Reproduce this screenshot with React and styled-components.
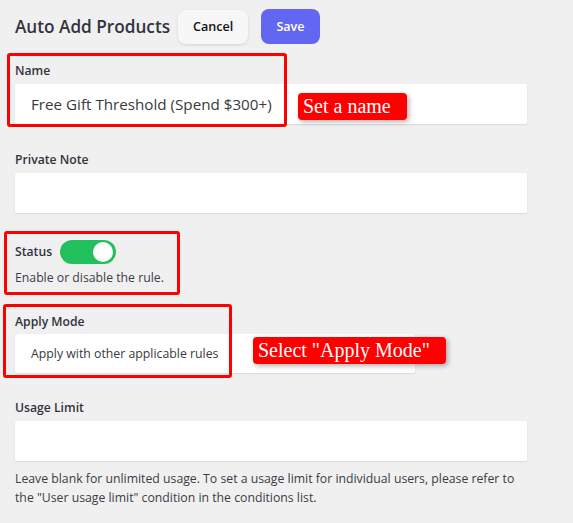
import styled, { createGlobalStyle } from "styled-components"

const GlobalStyle = createGlobalStyle`
  body {
    margin: 0;
    background: #f0f0f0;
    font-family: "Open Sans", "Noto Sans", sans-serif;
    color: #3c3c46;
  }
`

// annotation data: red frames and tags drawn over the form
const fields = [
  { key: "name", label: "Name", value: "Free Gift Threshold (Spend $300+)", big: true,
    frame: { left: -8, top: -9, width: 280, height: 74 },
    tag: { text: "Set a name", left: 283, top: 31 } },
  { key: "note", label: "Private Note", value: "" },
]

function App() {
  return (
    <>
      <GlobalStyle />
      <Page>
        <Header>
          <Title>Auto Add Products</Title>
          <Button>Cancel</Button>
          <Button $primary>Save</Button>
        </Header>

        {fields.map((f) => (
          <Field key={f.key}>
            <Label>{f.label}</Label>
            <Input $big={f.big}>{f.value}</Input>
            {f.frame && <Frame style={f.frame} />}
            {f.tag && <Tag style={{ left: f.tag.left, top: f.tag.top }}>{f.tag.text}</Tag>}
          </Field>
        ))}

        <Field $gap="26px">
          <StatusRow>
            <Label $inline>Status</Label>
            <Toggle $on>
              <Knob />
            </Toggle>
          </StatusRow>
          <Help>Enable or disable the rule.</Help>
          <Frame style={{ left: -11, top: -9, width: 176, height: 64 }} />
        </Field>

        <Field $gap="26px">
          <Label $tight>Apply Mode</Label>
          <Input $width="400px" $height="39px">Apply with other applicable rules</Input>
          <Frame style={{ left: -12, top: -9, width: 229, height: 74 }} />
          <Tag style={{ left: 238, top: 24 }}>Select "Apply Mode"</Tag>
        </Field>

        <Field>
          <Label>Usage Limit</Label>
          <Input />
          <Help $spaced>
            Leave blank for unlimited usage. To set a usage limit for individual users, please refer to
            the "User usage limit" condition in the conditions list.
          </Help>
        </Field>
      </Page>
    </>
  )
}

const Page = styled.div`
  width: 512px;
  padding: 9px 15px 0;
`

const Header = styled.div`
  display: flex;
  align-items: center;
  height: 35px;
  margin-bottom: 18px;
`

const Title = styled.h1`
  margin: 0 8px 0 0;
  font-size: 17.2px;
  font-weight: 600;
  color: #33333d;
`

const Button = styled.button`
  font-family: inherit;
  font-size: 12.6px;
  font-weight: 600;
  height: ${(p) => (p.$primary ? "35px" : "34px")};
  padding: 0 15px;
  margin-left: ${(p) => (p.$primary ? "13px" : "0")};
  border: none;
  border-radius: 8px;
  background: ${(p) => (p.$primary ? "#6366f1" : "#f7f7f7")};
  color: ${(p) => (p.$primary ? "#fff" : "#111")};
  box-shadow: ${(p) => (p.$primary ? "none" : "0 1px 3px rgba(0,0,0,0.12)")};
  cursor: pointer;
`

const Field = styled.div`
  position: relative;
  margin-bottom: ${(p) => p.$gap || "27px"};
`

const Label = styled.div`
  font-size: 12.2px;
  font-weight: 600;
  line-height: 18px;
  color: #33333d;
  margin-bottom: ${(p) => (p.$inline ? "0" : p.$tight ? "3px" : "4px")};
`

const Input = styled.div`
  box-sizing: border-box;
  width: ${(p) => p.$width || "100%"};
  height: ${(p) => p.$height || "40px"};
  display: flex;
  align-items: center;
  padding: 0 16px;
  background: #fff;
  border-radius: 2px;
  box-shadow: 0 1px 2px rgba(0, 0, 0, 0.1);
  font-size: ${(p) => (p.$big ? "15.2px" : "12.3px")};
  color: #3a3a3a;
  white-space: nowrap;
`

const StatusRow = styled.div`
  display: flex;
  align-items: center;
  gap: 8px;
  height: 24px;
`

const Toggle = styled.div`
  width: 56px;
  height: 24px;
  border-radius: 12px;
  background: ${(p) => (p.$on ? "#22c05c" : "#ccc")};
  display: flex;
  align-items: center;
  justify-content: ${(p) => (p.$on ? "flex-end" : "flex-start")};
  padding: 0 3px;
  box-sizing: border-box;
`

const Knob = styled.div`
  width: 20px;
  height: 20px;
  border-radius: 50%;
  background: #fff;
`

const Help = styled.p`
  margin: ${(p) => (p.$spaced ? "8px 0 0" : "4px 0 0")};
  font-size: 12.25px;
  line-height: 19px;
  color: #3c3c46;
`

const Frame = styled.div`
  position: absolute;
  box-sizing: border-box;
  border: 3px solid #f00;
  border-radius: 3px;
  pointer-events: none;
`

const Tag = styled.div`
  position: absolute;
  background: #f00;
  color: #fff;
  font-family: "Liberation Serif", serif;
  font-size: 20px;
  line-height: 27px;
  padding: 0 16px 0 5px;
  border-radius: 4px;
  box-shadow: 2px 2px 5px rgba(0, 0, 0, 0.3);
  white-space: nowrap;
`

export default App
